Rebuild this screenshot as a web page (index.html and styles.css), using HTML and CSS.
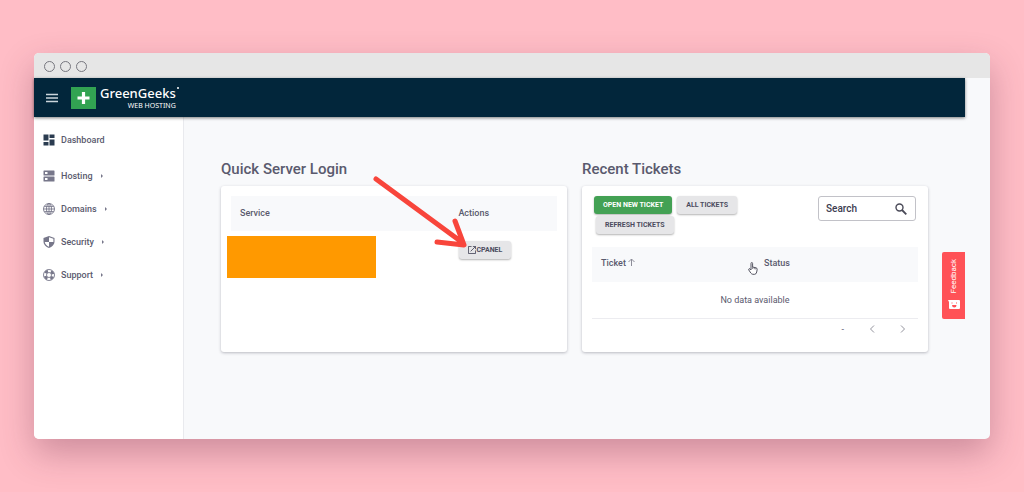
FILE: index.html
```html
<!DOCTYPE html>
<html lang="en">
<head>
  <meta charset="utf-8">
  <title>GreenGeeks Dashboard</title>
  <link rel="stylesheet" href="styles.css">
</head>
<body>
  <div class="window">
    <div class="titlebar">
      <span class="dot"></span>
      <span class="dot"></span>
      <span class="dot"></span>
    </div>

    <header class="topbar">
      <button class="menu-btn" aria-label="Menu">
        <svg width="12" height="10" viewBox="0 0 12 10"><path d="M0 1.5h12M0 5h12M0 8.5h12" stroke="#cbd5db" stroke-width="1.6"/></svg>
      </button>
      <a href="#" class="logo">
        <svg width="25" height="22" viewBox="0 0 25 22"><rect width="25" height="22" fill="#32a352"/><path d="M12.5 5v12M6.500 11h12" stroke="#fff" stroke-width="3.200"/></svg>
        <span class="logo-text">
          <span class="logo-name">GreenGeeks<span class="logo-mark"></span></span>
          <span class="logo-sub">WEB HOSTING</span>
        </span>
      </a>
    </header>

    <div class="app">
      <nav class="sidebar">
        <a href="#" class="nav-item">
          <svg viewBox="0 0 24 24" class="dark"><path d="M1 1h10v12H1zM13 1h10v7H13zM1 16h10v7H1zM13 11h10v12H13z"/></svg>
          Dashboard
        </a>
        <a href="#" class="nav-item">
          <svg viewBox="0 0 24 24"><path fill-rule="evenodd" d="M2 1h20q1 0 1 1v8q0 1-1 1H2q-1 0-1-1V2q0-1 1-1zM2 13h20q1 0 1 1v8q0 1-1 1H2q-1 0-1-1v-8q0-1 1-1zM4 4v4h5V4zM4 16v4h5v-4z"/></svg>
          Hosting <span class="caret"></span>
        </a>
        <a href="#" class="nav-item">
          <svg viewBox="0 0 24 24"><g fill="none" stroke="#77778a" stroke-width="1.8"><circle cx="12" cy="12" r="11"/><ellipse cx="12" cy="12" rx="5" ry="11"/><path d="M1 12h22M2.500 6.800h19M2.500 17.200h19M12 1v22"/></g></svg>
          Domains <span class="caret"></span>
        </a>
        <a href="#" class="nav-item">
          <svg viewBox="0 0 24 24"><path d="M12 0 1 4v7c0 6 4.800 11 11 13 6.200-2 11-7 11-13V4zM12 12v9.500C7.500 20 4 16 3.500 12zM12 2.500l8.800 3.200V12H12z" fill-rule="evenodd"/></svg>
          Security <span class="caret"></span>
        </a>
        <a href="#" class="nav-item">
          <svg viewBox="0 0 24 24"><g fill="none" stroke="#77778a"><circle cx="12" cy="12" r="11" stroke-width="1.800"/><circle cx="12" cy="12" r="5" stroke-width="1.800"/><circle cx="12" cy="12" r="8" stroke-width="5.500" stroke-dasharray="6.280 6.280" stroke-dashoffset="-3.140"/></g></svg>
          Support <span class="caret"></span>
        </a>
      </nav>

      <main class="content">
        <section class="panel">
          <h2>Quick Server Login</h2>
          <div class="card">
            <table class="services">
              <thead>
                <tr><th class="col-service">Service</th><th>Actions</th></tr>
              </thead>
              <tbody>
                <tr>
                  <td><span class="redacted"></span></td>
                  <td>
                    <button class="btn btn-cpanel">
                      <svg width="8" height="8" viewBox="0 0 18 18" fill="none" stroke="#4c4c5e" stroke-width="2"><path d="M8 1H1v16h16v-7M11 1h6v6M17 1 6 12"/></svg>CPANEL
                    </button>
                  </td>
                </tr>
              </tbody>
            </table>
          </div>
          <svg class="arrow" width="96" height="74" viewBox="0 0 96 74" fill="none" stroke="#f8453b" stroke-width="5" stroke-linecap="round" stroke-linejoin="round"><path d="M4 4 91 68M83 46l9 24-27-3"/></svg>
        </section>

        <section class="panel">
          <h2>Recent Tickets</h2>
          <div class="card">
            <div class="toolbar">
              <div class="actions">
                <button class="btn btn-primary">OPEN NEW TICKET</button>
                <button class="btn">ALL TICKETS</button>
                <button class="btn">REFRESH TICKETS</button>
              </div>
              <label class="search">
                <input type="text" placeholder="Search" aria-label="Search">
                <svg width="12" height="12" viewBox="0 0 12 12" fill="none" stroke="#4a4a58"><circle cx="4.500" cy="4.500" r="3.500" stroke-width="1.400"/><path d="m7 7 4.300 4.300" stroke-width="1.800"/></svg>
              </label>
            </div>
            <table class="tickets">
              <thead>
                <tr>
                  <th class="col-ticket">Ticket <svg width="7" height="8" viewBox="0 0 7 8" fill="none" stroke="#8d8d99"><path d="M3.500 8V1M.5 4l3-3 3 3"/></svg></th>
                  <th>Status</th>
                </tr>
              </thead>
              <tbody>
                <tr><td colspan="2">No data available</td></tr>
              </tbody>
            </table>
            <div class="pager">
              <span>-</span>
              <button aria-label="Previous page"><svg width="6" height="8" viewBox="0 0 6 8"><path d="M5 .5 1.500 4 5 7.500"/></svg></button>
              <button aria-label="Next page"><svg width="6" height="8" viewBox="0 0 6 8"><path d="M1 .5 4.500 4 1 7.500"/></svg></button>
            </div>
          </div>
          <svg class="pointer" width="10" height="13" viewBox="0 0 10 13"><path d="M3 8V1.500q0-1 .8-1t.8 1V5l3.400.8q1.300.3 1.200 1.600L8.700 10q-.2 2-2 2.300H4.800Q3.500 12 2.800 11L.8 8q-.5-1 .3-1.300T3 8z" fill="#fff" stroke="#555562"/><path d="M4.600 5v2M6.300 5.500v1.700M7.800 6v1.500" stroke="#555562" stroke-width=".7"/></svg>
        </section>
      </main>

      <button class="feedback">
        <span>Feedback</span>
        <svg width="12" height="10" viewBox="0 0 12 10"><path d="M0 0h11q1 0 1 1v7q0 1-1 1H2q-1 0-1-1V2z" fill="#fff"/><path d="M4 2.500v1M8.500 2.500v1" stroke="#ff5257"/><path d="M4 5h4.500q0 2.500-2.200 2.500T4 5z" fill="#ff5257"/></svg>
      </button>
    </div>
  </div>
</body>
</html>
```
FILE: styles.css
```css
* {
  box-sizing: border-box;
}

body {
  margin: 0;
  min-height: 100vh;
  padding: 53px 34px;
  background: #ffbdc6;
  font-family: Roboto, "Liberation Sans", sans-serif;
  color: #5a5a6e;
}

svg {
  flex: none;
}

button {
  font-family: inherit;
  border: 0;
  padding: 0;
  cursor: pointer;
}

a {
  text-decoration: none;
}

/* Browser window */
.window {
  display: flex;
  flex-direction: column;
  min-height: calc(100vh - 106px);
  border-radius: 5px;
  background: #f8f9fb;
  box-shadow: 0 14px 34px rgba(90, 30, 60, 0.3);
}

.titlebar {
  display: flex;
  align-items: center;
  gap: 5px;
  height: 25px;
  padding: 2px 10px 0;
  border-radius: 5px 5px 0 0;
  background: #e6e6e6;
}

.dot {
  width: 11px;
  height: 11px;
  border: 1px solid #77777f;
  border-radius: 50%;
}

/* Header */
.topbar {
  display: flex;
  align-items: center;
  gap: 13px;
  height: 39px;
  margin-right: 25px;
  padding-left: 12px;
  background: #02263b;
  box-shadow: 0 1px 3px rgba(0, 0, 0, 0.5);
  z-index: 1;
}

.menu-btn {
  display: flex;
  background: none;
}

.logo {
  display: flex;
  align-items: center;
  gap: 4px;
  color: #fff;
  font-family: "Noto Sans", sans-serif;
}

.logo-text {
  display: flex;
  flex-direction: column;
  align-items: flex-end;
}

.logo-name {
  position: relative;
  font-size: 13px;
  font-weight: 500;
  line-height: 15px;
}

.logo-mark {
  position: absolute;
  top: 1px;
  right: -3px;
  width: 2px;
  height: 2px;
  border-radius: 50%;
  background: #fff;
}

.logo-sub {
  font-size: 7px;
  line-height: 9px;
}

/* Body */
.app {
  position: relative;
  display: flex;
  flex: 1;
}

.sidebar {
  width: 150px;
  padding-top: 12px;
  border-right: 1px solid #e9eaee;
  border-radius: 0 0 0 5px;
  background: #fff;
}

.nav-item {
  display: flex;
  align-items: center;
  gap: 6px;
  height: 33px;
  padding-left: 9px;
  color: #5a5a6e;
  font-size: 9px;
  font-weight: 500;
}

.nav-item:first-child {
  height: 22px;
  margin-bottom: 8px;
}

.nav-item svg {
  width: 12px;
  height: 12px;
  fill: #77778a;
}

.nav-item .dark {
  fill: #2b3c50;
}

.caret {
  margin-left: 2px;
  border: 2px solid transparent;
  border-left-color: #77778a;
}

.content {
  display: grid;
  grid-template-columns: 1fr 1fr;
  gap: 15px;
  flex: 1;
  align-content: start;
  padding: 42px 62px 24px 37px;
}

.panel {
  position: relative;
}

h2 {
  margin: 0 0 7px;
  font-size: 15px;
  font-weight: 500;
  line-height: 20px;
}

.card {
  min-height: 166px;
  padding: 10px;
  border-radius: 3px;
  background: #fff;
  box-shadow: 0 1px 3px rgba(40, 40, 60, 0.3);
}

/* Tables */
table {
  width: 100%;
  border-collapse: collapse;
  table-layout: fixed;
  font-size: 9px;
}

th {
  height: 35px;
  padding: 0 9px 2px;
  background: #f8f9fb;
  font-weight: 500;
  text-align: left;
}

.col-service {
  width: 67%;
}

.col-ticket {
  width: 50%;
}

.tickets th {
  padding-bottom: 4px;
}

.services td {
  padding: 10px;
}

.redacted {
  position: absolute;
  top: 77px;
  left: 6px;
  width: 149px;
  height: 42px;
  background: #ff9900;
}

/* Buttons */
.btn {
  display: inline-flex;
  align-items: center;
  height: 18px;
  margin-left: 2px;
  padding: 0 9px;
  border-radius: 3px;
  background: #e6e6e8;
  box-shadow: 0 1px 2px rgba(0, 0, 0, 0.3);
  color: #4c4c5e;
  font-size: 7px;
  font-weight: 700;
}

.btn-primary {
  margin-left: 0;
  background: #43a154;
  color: #fff;
}

.btn-cpanel {
  margin-left: 0;
}

/* Tickets */
.toolbar {
  display: flex;
  justify-content: space-between;
  align-items: flex-start;
  height: 51px;
  padding: 0 2px;
}

.actions {
  display: flex;
  flex-wrap: wrap;
  gap: 2px 3px;
  width: 160px;
}

.search {
  display: flex;
  align-items: center;
  width: 98px;
  height: 25px;
  padding: 0 8px 0 7px;
  border: 1px solid #c2c2c8;
  border-radius: 3px;
}

.search input {
  width: 100%;
  min-width: 0;
  padding: 0;
  border: 0;
  outline: 0;
  background: none;
  font-family: inherit;
  font-size: 10px;
  font-weight: 500;
}

.search input::placeholder {
  color: #3c3c50;
}

.tickets td {
  height: 36px;
  padding: 0;
  border-bottom: 1px solid #ececf0;
  text-align: center;
}

.pager {
  display: flex;
  justify-content: flex-end;
  align-items: center;
  gap: 25px;
  height: 21px;
  padding-right: 12px;
  font-size: 9px;
}

.pager button {
  display: flex;
  background: none;
}

.pager svg {
  fill: none;
  stroke: #92929c;
}

/* Overlays */
.arrow {
  position: absolute;
  top: 16px;
  left: 151px;
}

.pointer {
  position: absolute;
  top: 103px;
  left: 166px;
}

.feedback {
  position: absolute;
  top: 135px;
  right: 25px;
  display: flex;
  flex-direction: column;
  align-items: center;
  gap: 7px;
  width: 23px;
  height: 67px;
  padding-top: 7px;
  border-radius: 2px 0 0 2px;
  background: #ff5257;
  color: #fff;
  font-size: 8px;
}

.feedback span {
  writing-mode: vertical-rl;
  transform: rotate(180deg);
}
```
